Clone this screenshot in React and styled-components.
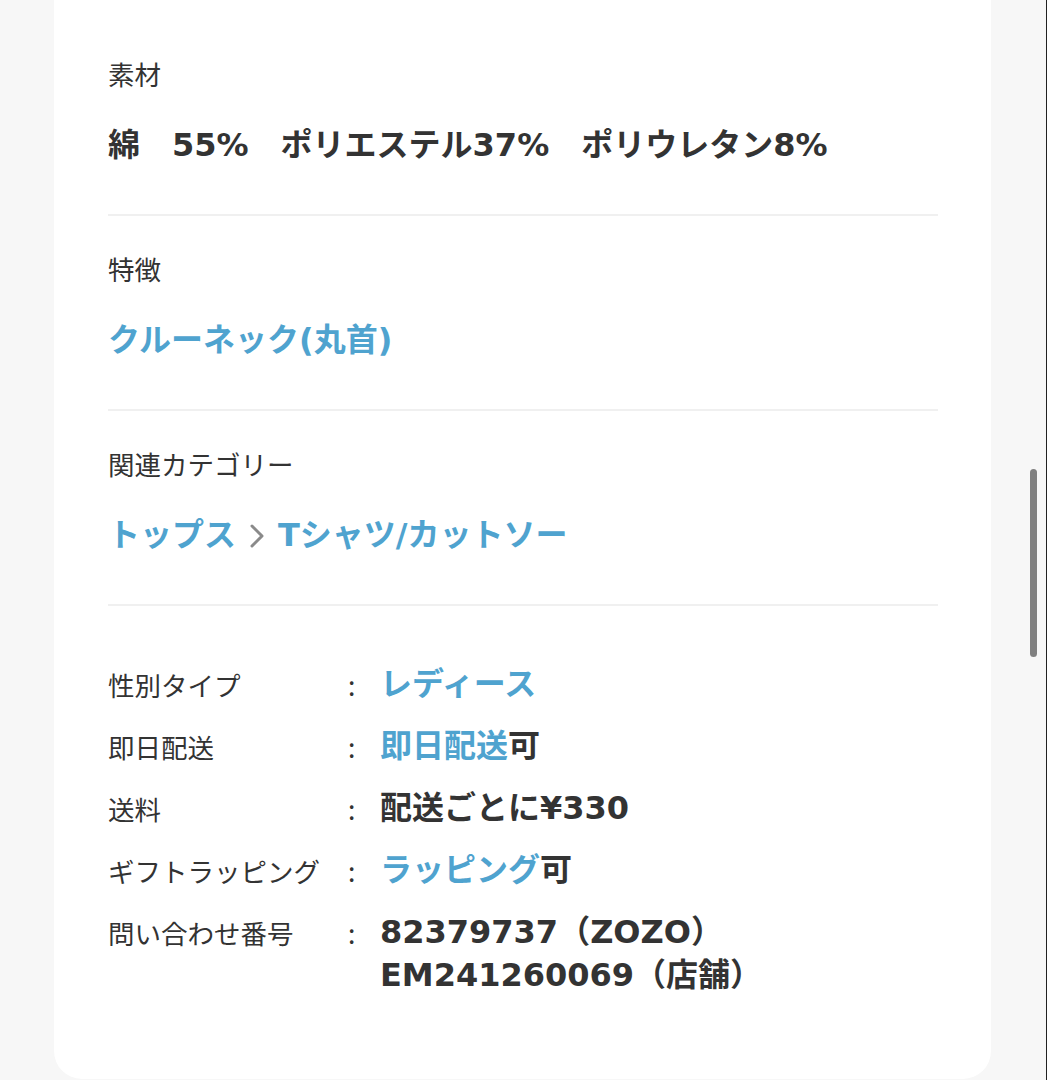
import styled, { createGlobalStyle } from "styled-components";

const GlobalStyle = createGlobalStyle`
  body {
    margin: 0;
    background-color: #f7f7f7;
    font-family: "Noto Sans CJK JP", "Noto Sans", sans-serif;
    color: #333;
  }
`;

const Page = styled.div`
  padding-left: 54px;
  width: 937px;
`;

// 白いカード
const Card = styled.div`
  background-color: #fff;
  border-radius: 0 0 28px 28px;
  padding: 54px 53px 82px 54px;
`;

const Section = styled.section`
  padding-bottom: 45px;
  margin-bottom: 33px;
  border-bottom: 2px solid #f0f0f0;
`;

const Heading = styled.div`
  font-size: 26.5px;
  line-height: 39px;
  margin-bottom: 28px;
`;

// 英数字は幅の広い書体で
const valueFont = `"DejaVu Sans", "Noto Sans CJK JP", sans-serif`;

const Value = styled.div`
  font-family: ${valueFont};
  font-size: 32px;
  line-height: 48px;
  font-weight: 700;
  color: ${(props) => (props.link ? "#4fa3cf" : "#333")};
  white-space: pre;
`;

const Chevron = styled.svg`
  display: inline-block;
  vertical-align: -2px;
  margin: 0 14px;
`;

const Table = styled.div`
  display: grid;
  grid-template-columns: 240px 32px 1fr;
  row-gap: 19px;
  padding-top: 24px;
`;

const Label = styled.div`
  font-size: 26.5px;
  line-height: 43px;
`;

const Colon = styled(Label)``;

const Cell = styled.div`
  font-family: ${valueFont};
  font-size: 32px;
  line-height: 43px;
  font-weight: 700;
`;

const Link = styled.span`
  color: #4fa3cf;
`;

const Scrollbar = styled.div`
  position: fixed;
  top: 469px;
  right: 10px;
  width: 7px;
  height: 188px;
  border-radius: 4px;
  background-color: #808080;
`;

const Edge = styled.div`
  position: fixed;
  top: 0;
  right: 0;
  width: 1px;
  height: 100%;
  background-color: #222;
`;

const rows = [
  { label: "性別タイプ", value: <Link>レディース</Link> },
  {
    label: "即日配送",
    value: (
      <>
        <Link>即日配送</Link>可
      </>
    ),
  },
  { label: "送料", value: "配送ごとに¥330" },
  {
    label: "ギフトラッピング",
    value: (
      <>
        <Link>ラッピング</Link>可
      </>
    ),
  },
  {
    label: "問い合わせ番号",
    value: (
      <>
        82379737（ZOZO）
        <br />
        EM241260069（店舗）
      </>
    ),
  },
];

const App = () => {
  return (
    <>
      <GlobalStyle />
      <Page>
        <Card>
          <Section>
            <Heading>素材</Heading>
            <Value>綿　55%　ポリエステル37%　ポリウレタン8%</Value>
          </Section>
          <Section>
            <Heading>特徴</Heading>
            <Value link>クルーネック(丸首)</Value>
          </Section>
          <Section>
            <Heading>関連カテゴリー</Heading>
            <Value link>
              トップス
              <Chevron width="14" height="24" viewBox="0 0 14 24">
                <path
                  d="M2 2 L12 12 L2 22"
                  fill="none"
                  stroke="#8a8a8a"
                  strokeWidth="3"
                  strokeLinecap="round"
                  strokeLinejoin="round"
                />
              </Chevron>
              Tシャツ/カットソー
            </Value>
          </Section>
          <Table>
            {rows.map((row) => (
              <>
                <Label key={row.label}>{row.label}</Label>
                <Colon>:</Colon>
                <Cell>{row.value}</Cell>
              </>
            ))}
          </Table>
        </Card>
      </Page>
      <Scrollbar />
      <Edge />
    </>
  );
};

export default App;
